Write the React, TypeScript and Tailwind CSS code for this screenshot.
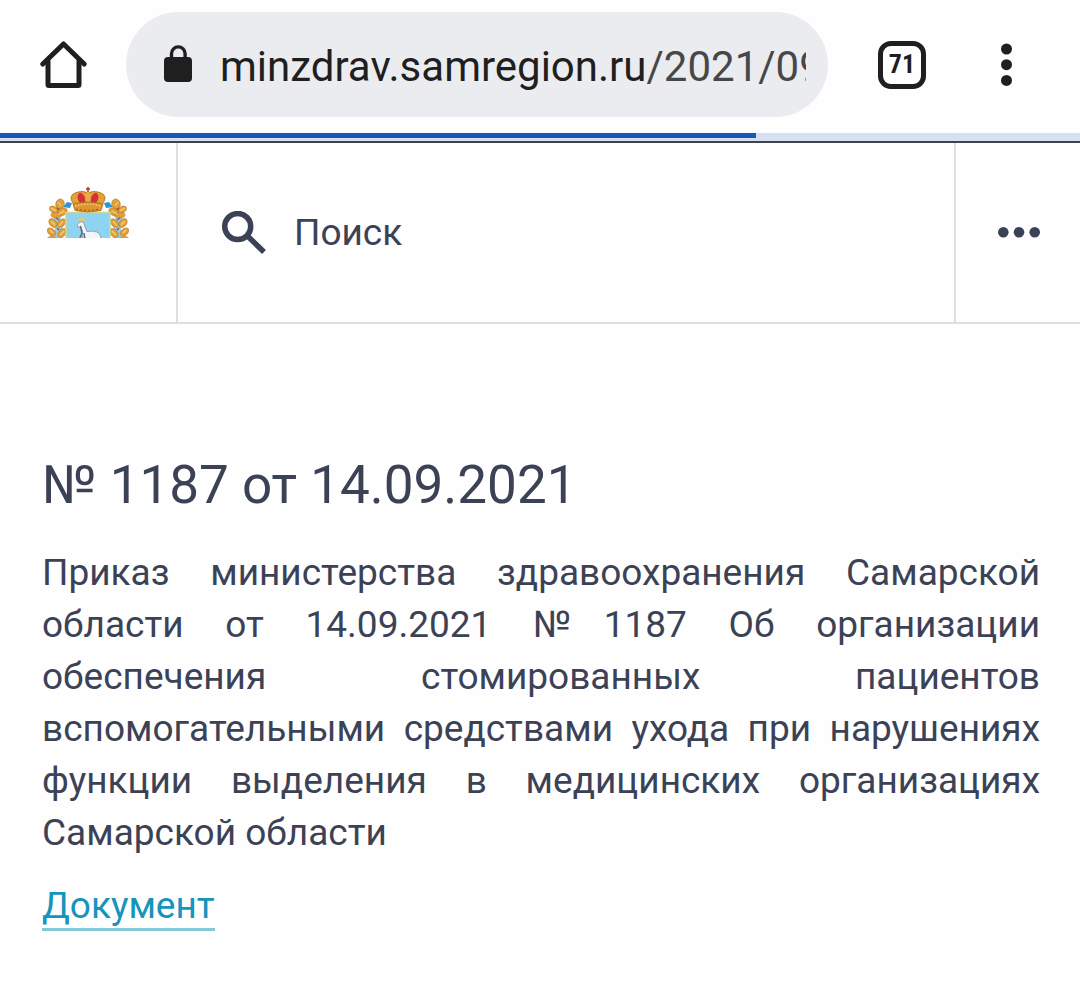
import React, { useState } from 'react';

const PAGE_PROGRESS = 70;
const OPEN_TABS = 71;

const HomeIcon: React.FC = () => (
  <svg className="w-12 h-12" viewBox="0 0 48 48" fill="none" stroke="#1f1f1f" strokeWidth="5" strokeLinecap="round" strokeLinejoin="round">
    <path d="M2.8 23 L23.5 3 L44.2 23" />
    <path d="M8 20 V43.5 Q8 44.5 9 44.5 H38 Q39 44.5 39 43.5 V20" />
  </svg>
);

const LockIcon: React.FC = () => (
  <svg className="w-7 h-10 shrink-0" viewBox="0 0 28 40" fill="none">
    <path d="M7.5 15 V8.7 a6.8 6.8 0 0 1 13.6 0 V15" stroke="#1f1f1f" strokeWidth="3.4" />
    <rect x="0" y="12" width="28" height="25" rx="4" fill="#1f1f1f" />
  </svg>
);

const SearchIcon: React.FC = () => (
  <svg className="w-11 h-11 shrink-0" viewBox="0 0 44 44" fill="none" stroke="#3c4256" strokeWidth="5.5">
    <circle cx="15.7" cy="15.500" r="13" />
    <path d="M25.500 25 L42 41" />
  </svg>
);

const Branch: React.FC = () => (
  <g>
    <path d="M13 20 Q7 30 13 38 Q9 44 13 52" stroke="#8fd0ee" strokeWidth="7" fill="none" />
    <path d="M16 20 l4 -5 5 1 -2 5 z" fill="#2e93d1" />
    <g fill="#e0a03a" stroke="#b5762a" strokeWidth="0.6">
      <ellipse cx="13" cy="17" rx="4.2" ry="5" transform="rotate(15 13 17)" />
      <ellipse cx="7" cy="23" rx="5" ry="3.2" transform="rotate(35 7 23)" />
      <ellipse cx="15" cy="25" rx="5.6" ry="3.6" transform="rotate(-30 15 25)" />
      <ellipse cx="9" cy="28" rx="5" ry="2.6" />
      <ellipse cx="6" cy="36" rx="5" ry="3.4" transform="rotate(50 6 36)" />
      <ellipse cx="14.500" cy="36" rx="5" ry="3.2" transform="rotate(-45 14.500 36)" />
      <ellipse cx="4.500" cy="45" rx="5" ry="3.2" transform="rotate(40 4.500 45)" />
      <ellipse cx="15" cy="46" rx="5.2" ry="3.4" transform="rotate(-50 15 46)" />
      <path d="M0 51.500 q5 -5 10 0 z" />
    </g>
    <path d="M11 15 l3 4 M4 21 l5 3 M12 27 l5 -3 M4 34 l4 4 M12 39 l4 -5 M3 43 l3 3 M13 48 l4 -4" stroke="#f6d376" strokeWidth="1.2" />
    <path d="M10 21 l2 2 M9 31 l3 2 M10 41 l2 2" stroke="#b5432c" strokeWidth="1.4" />
  </g>
);

const CoatOfArms: React.FC = () => (
  <svg className="w-full h-auto" viewBox="0 0 82 51">
    <Branch />
    <g transform="translate(82 0) scale(-1 1)">
      <Branch />
    </g>
    <path d="M19 53 V25.500 H63 V53 Z" fill="#8fd3f3" stroke="#c9d795" strokeWidth="1.6" />
    {/* goat */}
    <path d="M31.500 34 Q30 30 34 31.500 Q36 29.500 38 32 Q39 34 36.500 36" fill="#d8cd7d" />
    <path d="M30 38 L33 35 L36.500 35 L38 40 L40 44.500 Q45 43.500 50 45 Q53 46.500 54 50 L52 52 H36 L35.500 44 L33.500 40 L31 40 Z" fill="#f3f5f8" stroke="#76839a" strokeWidth="0.7" />
    <path d="M33.500 39 L35 46 L32.500 52 M37 46 L38 52" stroke="#59657c" strokeWidth="1.4" fill="none" />
    {/* crown */}
    <path d="M27 18 Q20 8.500 29 5.500 Q36 3 41 6 Q46 3 53 5.500 Q62 8.500 55 18 Z" fill="#dfa036" stroke="#b3702a" strokeWidth="0.8" />
    <path d="M33 16 Q28 9 33 5.500 Q39 8 39 16 Z M49 16 Q54 9 49 5.500 Q43 8 43 16 Z" fill="#d92f3c" />
    <path d="M38.500 16 Q37.500 6 41 4 Q44.500 6 43.500 16 Z" fill="#e5ad45" />
    <path d="M26 17 Q41 13 56 17 L54 23.500 Q41 26.500 28 23.500 Z" fill="#dc982f" stroke="#a9651f" strokeWidth="0.8" />
    <path d="M28 19 Q41 15.500 54 19" stroke="#f5d37c" strokeWidth="1.2" strokeDasharray="1.500 1.500" fill="none" />
    <path d="M29 22 Q41 24.500 53 22" stroke="#c0502c" strokeWidth="1.2" strokeDasharray="2 2" fill="none" />
    <path d="M41 0 V5 M39 2 H43" stroke="#b5352c" strokeWidth="1.500" />
  </svg>
);

const BrowserBar: React.FC = () => (
  <div className="flex items-center pt-3 pb-4 pl-10 pr-[67px]">
    <button type="button" aria-label="Главная страница" className="shrink-0">
      <HomeIcon />
    </button>
    <button type="button" className="flex flex-1 min-w-0 items-center ml-[38px] h-[105px] rounded-full bg-[#ebecf0] pl-[38px] pr-[22px] text-left">
      <LockIcon />
      <span className="ml-7 mt-1 flex-1 min-w-0 overflow-hidden whitespace-nowrap text-[42px] leading-[56px] text-[#474747]">
        <span className="text-[#1f1f1f]">minzdrav.samregion.ru</span>/2021/09
      </span>
    </button>
    <button type="button" className="ml-[50px] shrink-0 w-12 h-12 rounded-[13px] border-[5px] border-[#1f1f1f] flex items-center justify-center font-['Roboto_Condensed','Roboto',sans-serif] text-[26px] font-bold text-[#1f1f1f]">
      {OPEN_TABS}
    </button>
    <button type="button" aria-label="Меню браузера" className="ml-[75px] shrink-0">
      <svg className="w-3 h-12" viewBox="0 0 12 48" fill="#1f1f1f">
        <circle cx="5.500" cy="8" r="5.500" />
        <circle cx="5.500" cy="23.700" r="5.500" />
        <circle cx="5.500" cy="39.400" r="5.500" />
      </svg>
    </button>
  </div>
);

const SiteHeader: React.FC = () => {
  const [query, setQuery] = useState('');

  return (
    <header className="flex h-[181px] border-b-2 border-[#dcdfe1]">
      <a href="#" aria-label="Министерство здравоохранения" className="w-[178px] shrink-0 border-r-2 border-[#dcdfe1] px-[47px] pt-11">
        <CoatOfArms />
      </a>
      <form className="flex flex-1 min-w-0 items-center px-11" onSubmit={(e) => e.preventDefault()}>
        <label htmlFor="site-search" aria-label="Поиск">
          <SearchIcon />
        </label>
        <input
          id="site-search"
          type="text"
          value={query}
          onChange={(e) => setQuery(e.target.value)}
          placeholder="Поиск"
          className="ml-7 flex-1 min-w-0 text-[37px] text-[#3c4256] placeholder:text-[#3c4256] focus:outline-none"
        />
      </form>
      <button type="button" aria-label="Меню" className="w-[126px] shrink-0 border-l-2 border-[#dcdfe1] pl-[42px]">
        <svg className="w-11 h-3" viewBox="0 0 44 12" fill="#3c4256">
          <circle cx="5.300" cy="5.300" r="5.300" />
          <circle cx="21" cy="5.300" r="5.300" />
          <circle cx="36.700" cy="5.300" r="5.300" />
        </svg>
      </button>
    </header>
  );
};

export default function App() {
  return (
    <div className="min-h-screen bg-[#fefefe] font-['Roboto','Noto_Sans',sans-serif] text-[#3c4256]">
      <BrowserBar />
      <div role="progressbar" aria-label="Загрузка" aria-valuenow={PAGE_PROGRESS} className="h-2 bg-[#d5e1f3]">
        <div className="h-[5px] bg-[#1558b8]" style={{ width: `${PAGE_PROGRESS}%` }} />
      </div>
      <div className="h-0.5 bg-[#3f444c]" />

      <SiteHeader />

      <main className="pl-[42px] pr-10 pt-[129px]">
        <h1 className="text-[53px] leading-[64px]">№ 1187 от 14.09.2021</h1>
        <p className="mt-[30px] text-[37px] leading-[52px] text-justify">
          Приказ министерства здравоохранения Самарской области от 14.09.2021 №1187 Об организации
          обеспечения стомированных пациентов вспомогательными средствами ухода при нарушениях функции
          выделения в медицинских организациях Самарской области
        </p>
        <a href="#" className="mt-[25px] inline-block border-b-[3px] border-[#85c8d8] text-[37px] leading-[44px] text-[#1594bd]">
          Документ
        </a>
      </main>
    </div>
  );
}
